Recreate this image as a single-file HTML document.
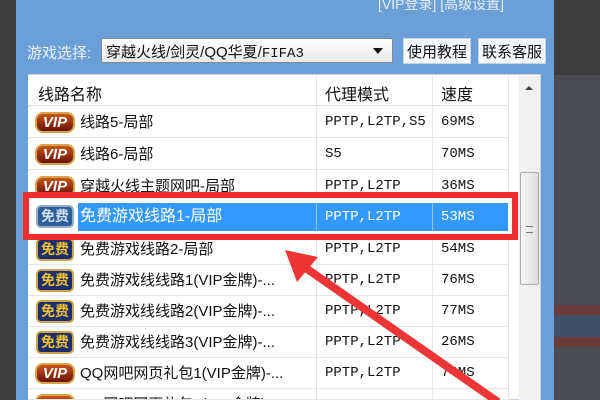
<!DOCTYPE html>
<html style="width:600px;height:400px;overflow:hidden"><head><meta charset="utf-8"><style>
*{margin:0;padding:0;box-sizing:border-box}
body{width:600px;height:400px;overflow:hidden;position:relative;background:#3d3d3d;font-family:"Liberation Sans","Noto Sans CJK SC",sans-serif}
.abs{position:absolute}
#panel{left:16px;top:0;width:538px;height:400px;background:#6a9fd7}
.zh{font-family:"Liberation Sans","Noto Sans CJK SC",sans-serif;font-size:15px;color:#111}
.mono{font-family:"Liberation Mono","Noto Sans CJK SC",monospace;font-size:14px;color:#111}
.btn{background:#f4f7fb;border:1px solid #c8d3e0;font-size:15px;color:#111;text-align:center;line-height:27px}
.row{position:absolute;left:28px;width:480px;height:31px;border-bottom:1px solid #e6e6e6;background:#fff}
.row span{position:absolute;top:0;line-height:31px}
.c1{left:52px}.c2{left:297px}.c3{left:413px}
.vip{position:absolute;left:7px;top:5px;width:40px;height:21px;border-radius:8px;background:linear-gradient(#c8541a,#6a1208);border:2px solid #d7a24a;color:#fff;font:bold italic 15px "Liberation Sans",sans-serif;text-align:center;line-height:17px}
.mf{position:absolute;left:8px;top:4px;width:38px;height:23px;border-radius:5px;background:#1d2f6a;border:2px solid #c9a449;color:#f0c030;font-size:14px;font-weight:bold;text-align:center;line-height:19px}
</style></head><body>
<div class="abs" style="left:554px;top:75px;width:46px;height:325px;background:#4a4c52"></div>
<div class="abs" style="left:554px;top:305px;width:46px;height:10px;background:#6b3a3a"></div>
<div class="abs" style="left:554px;top:337px;width:46px;height:10px;background:#6b3a3a"></div>
<div class="abs" style="left:554px;top:315px;width:46px;height:22px;background:#3f5068"></div>
<div id="panel" class="abs"></div>
<div class="abs zh" style="left:378px;top:-6px;color:#e8eef8;font-size:14px">[VIP登录] [高级设置]</div>
<div class="abs zh" style="left:27px;top:42px;color:#eef3fa;font-size:15px">游戏选择:</div>
<div class="abs" style="left:101px;top:38px;width:292px;height:25px;background:linear-gradient(#fff,#e9e9e9);border:1px solid #7f8a96;border-radius:2px"></div>
<div class="abs zh" style="left:106px;top:41px;font-size:15px">穿越火线/剑灵/QQ华夏/<span class="mono" style="font-size:14px">FIFA3</span></div>
<div class="abs" style="left:373px;top:48px;width:0;height:0;border-left:5px solid transparent;border-right:5px solid transparent;border-top:6px solid #111"></div>
<div class="abs btn" style="left:403px;top:38px;width:68px;height:26px">使用教程</div>
<div class="abs btn" style="left:478px;top:38px;width:68px;height:26px">联系客服</div>
<div class="abs" style="left:28px;top:74px;width:513px;height:326px;background:#fff;border:1px solid #c9d2dc"></div>
<div class="abs" style="left:28px;top:75px;width:480px;height:31px;background:#fff;border-bottom:1px solid #e0e0e0"></div>
<div class="abs zh" style="left:38px;top:81px;font-size:16px">线路名称</div>
<div class="abs zh" style="left:325px;top:81px;font-size:16px">代理模式</div>
<div class="abs zh" style="left:441px;top:81px;font-size:16px">速度</div>
<div class="abs" style="left:316px;top:75px;width:1px;height:325px;background:#e6e6e6;z-index:2"></div>
<div class="abs" style="left:432px;top:75px;width:1px;height:325px;background:#e6e6e6;z-index:2"></div>
<div class="abs" style="left:508px;top:75px;width:1px;height:325px;background:#e6e6e6;z-index:2"></div>
<div class="abs" style="left:519px;top:76px;width:21px;height:324px;background:#f0f0f0"></div>
<div class="abs" style="left:525px;top:86px;width:0;height:0;border-left:4px solid transparent;border-right:4px solid transparent;border-bottom:4px solid #444"></div>
<div class="abs" style="left:520px;top:172px;width:19px;height:113px;background:linear-gradient(90deg,#f8f8f8,#dcdcdc);border:1px solid #aaa;border-radius:2px"></div>
<div class="abs" style="left:526px;top:226px;width:7px;height:7px;border-top:1px solid #777;border-bottom:1px solid #777"></div>

<div class="row" style="top:107px"><div class="vip">VIP</div><span class="zh c1">线路5-局部</span><span class="mono c2">PPTP,L2TP,S5</span><span class="mono c3">69MS</span></div>
<div class="row" style="top:139px"><div class="vip">VIP</div><span class="zh c1">线路6-局部</span><span class="mono c2">S5</span><span class="mono c3">70MS</span></div>
<div class="row" style="top:171px"><div class="vip">VIP</div><span class="zh c1">穿越火线主题网吧-局部</span><span class="mono c2">PPTP,L2TP</span><span class="mono c3">36MS</span></div>
<div class="row" style="top:234px"><div class="mf">免费</div><span class="zh c1">免费游戏线路2-局部</span><span class="mono c2">PPTP,L2TP</span><span class="mono c3">54MS</span></div>
<div class="row" style="top:265px"><div class="mf">免费</div><span class="zh c1">免费游戏线线路1(VIP金牌)-...</span><span class="mono c2">PPTP,L2TP</span><span class="mono c3">76MS</span></div>
<div class="row" style="top:296px"><div class="mf">免费</div><span class="zh c1">免费游戏线线路2(VIP金牌)-...</span><span class="mono c2">PPTP,L2TP</span><span class="mono c3">77MS</span></div>
<div class="row" style="top:327px"><div class="mf">免费</div><span class="zh c1">免费游戏线线路3(VIP金牌)-...</span><span class="mono c2">PPTP,L2TP</span><span class="mono c3">26MS</span></div>
<div class="row" style="top:358px"><div class="vip">VIP</div><span class="zh c1">QQ网吧网页礼包1(VIP金牌)-...</span><span class="mono c2">PPTP,L2TP</span><span class="mono c3">74MS</span></div>
<div class="row" style="top:389px;height:11px;overflow:hidden"><div class="vip">VIP</div><span class="zh c1">QQ网吧网页礼包2(VIP金牌)-...</span></div>

<div class="abs" style="left:23px;top:192px;width:495px;height:48px;border:6px solid #ee2f2f;background:#fff;z-index:3"></div>
<div class="abs" style="left:33px;top:203px;width:475px;height:28px;z-index:4;background:#fff">
 <div class="abs" style="left:45px;top:0;width:430px;height:28px;background:#3399ff"></div>
 <div class="mf" style="left:3px;top:2px;background:#2f5f9a;color:#cfe0f0;border-color:#9ab;">免费</div>
 <span class="abs zh" style="left:47px;top:0;line-height:28px;color:#fff;font-size:16px">免费游戏线路1-局部</span>
 <div class="abs" style="left:283px;top:0;width:1px;height:28px;background:#8fc4ff"></div>
 <div class="abs" style="left:399px;top:0;width:1px;height:28px;background:#8fc4ff"></div>
 <span class="abs mono" style="left:292px;top:0;line-height:28px;color:#fff">PPTP,L2TP</span>
 <span class="abs mono" style="left:408px;top:0;line-height:28px;color:#fff">53MS</span>
</div>
<svg class="abs" style="left:0;top:0;z-index:5" width="600" height="400">
 <line x1="498" y1="402" x2="300" y2="264" stroke="#ee3535" stroke-width="8"/>
 <polygon points="285,250 318,257 297,282" fill="#ee3535"/>
</svg>
</body></html>
